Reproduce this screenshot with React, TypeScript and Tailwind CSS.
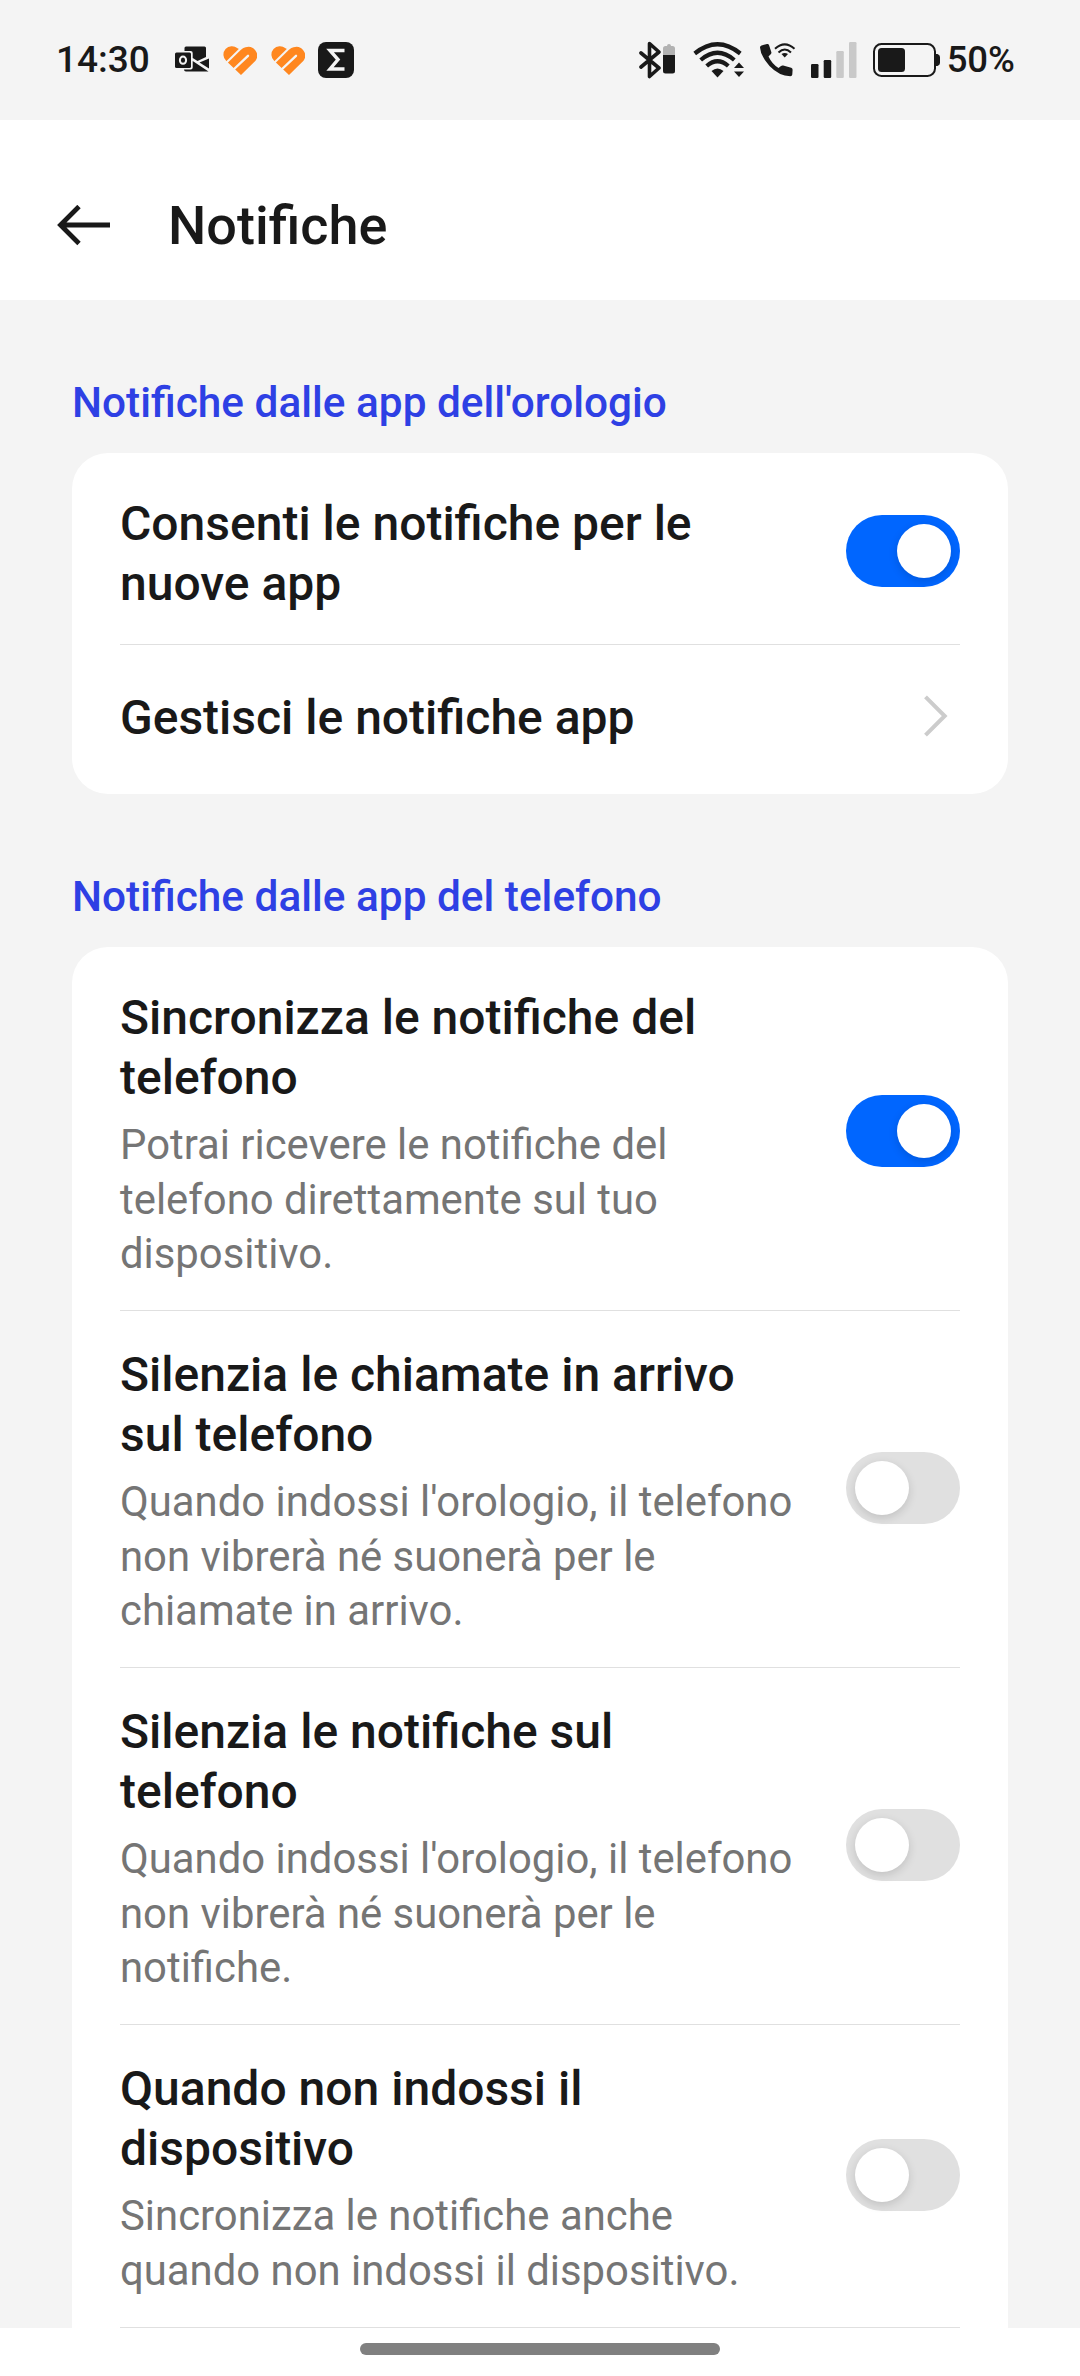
import type { ReactNode } from 'react';

function Outlook() {
  return (
    <svg width="36" height="28" viewBox="0 0 36 28" className="shrink-0">
      <path d="M12 .5h18.500a1.500 1.500 0 0 1 1.500 1.500v9L23.500 15 18.700 12V7a2 2 0 0 0-2-2H10.500V2A1.500 1.500 0 0 1 12 .5Z" fill="#191919" />
      <path d="M35 12.500V22.500L25.500 16.500Z" fill="#191919" />
      <path d="M10 23.500h6.700a2 2 0 0 0 2-2V15L34.500 25.500H12a2 2 0 0 1-2-2Z" fill="#191919" />
      <rect x="1" y="6.500" width="16" height="15.500" rx="1.500" fill="#191919" />
      <ellipse cx="9" cy="14.200" rx="3.100" ry="3.600" fill="none" stroke="#f4f4f4" strokeWidth="2" />
    </svg>
  );
}

function Heart() {
  return (
    <svg width="34" height="30" viewBox="0 0 34 30" className="shrink-0">
      <path d="M18 30 3.300 16A8.100 8.100 0 0 1 14.500 3.300Q16.500 4.800 18.500 4.200 20.300 2.700 22.500 2.200A8.900 8.900 0 0 1 32.500 15.800Z" fill="#ff871f" />
      <g fill="none" stroke="#f4f4f4" strokeWidth="2">
        <path d="M2.500 18.500 18 3.200" />
        <path d="M9 26 25 10.800" strokeWidth="2.400" strokeLinecap="round" />
      </g>
    </svg>
  );
}

function Sigma() {
  return (
    <svg width="36" height="36" viewBox="0 0 36 36" className="shrink-0">
      <rect width="36" height="36" rx="8" fill="#191919" />
      <path d="M26.500 8.500H12L20 17.500 12 27H26.500" fill="none" stroke="#f4f4f4" strokeWidth="3.400" strokeLinejoin="miter" />
    </svg>
  );
}

function Bluetooth() {
  return (
    <svg width="37" height="38" viewBox="0 0 37 38" className="shrink-0">
      <path d="M2 12 20 27 10.500 35.500V2.500L20 11 2 26" fill="none" stroke="#191919" strokeWidth="3.600" strokeLinejoin="round" strokeLinecap="round" />
      <path d="M24 15V7.500A2.500 2.500 0 0 1 26.500 5H28a2 2 0 0 1 4 0h1.500A2.500 2.500 0 0 1 36 7.500V15Z" fill="#b2b2b2" />
      <path d="M24 14h12v16a2.500 2.500 0 0 1-2.500 2.500h-7A2.500 2.500 0 0 1 24 30Z" fill="#191919" />
    </svg>
  );
}

function Wifi() {
  return (
    <svg width="52" height="38" viewBox="0 0 52 38" className="shrink-0">
      <g fill="none" stroke="#191919" strokeWidth="4.200">
        <path d="M1.700 12.500Q24.500-6 47.300 12.500" />
        <path d="M7.700 19Q24.500 4.500 41.300 19" />
        <path d="M13.700 25Q24.500 15.500 35.300 25" />
      </g>
      <path d="M18.500 30Q24.500 25 30.500 30L24.500 36.500Z" fill="#191919" />
      <path d="M41 27 46 21.500l5 5.500Z M41 30.500h10L46 36Z" fill="#191919" />
    </svg>
  );
}

function Phone() {
  return (
    <svg width="38" height="36" viewBox="0 0 38 36" className="shrink-0">
      <path d="M2.500 3.500 8 2q1.500-.3 2 1l2.300 7q.4 1.300-.6 2.200L9.500 14.500q3.500 7.500 10 11.500l2.500-2q1-.8 2.200-.4l8 2.200q1.400.5 1.400 1.900l-.3 4.800q-.2 1.700-1.900 1.700Q20 34 10.500 24 1.500 14 1 5.500q0-1.600 1.500-2Z" fill="#191919" />
      <g fill="none" stroke="#191919" strokeWidth="2">
        <path d="M16 6.800Q25.700-2 35.500 6.800" />
        <path d="M19.500 10.500Q25.700 4.500 32 10.500" />
      </g>
      <path d="M22.500 12Q25.700 10 29 12L25.700 15.500Z" fill="#191919" />
    </svg>
  );
}

function Signal() {
  return (
    <svg width="46" height="36" viewBox="0 0 46 36" className="shrink-0">
      <rect x="0" y="22" width="7.500" height="14" rx="1.200" fill="#191919" />
      <rect x="12.700" y="18" width="7.500" height="18" rx="1.200" fill="#191919" />
      <rect x="25.300" y="9" width="7.500" height="27" rx="1.200" fill="#c9c9c9" />
      <rect x="38" y="0" width="7.500" height="36" rx="1.200" fill="#c9c9c9" />
    </svg>
  );
}

function Battery() {
  return (
    <svg width="68" height="34" viewBox="0 0 68 34" className="shrink-0">
      <rect x="1" y="1" width="61" height="32" rx="7.500" fill="none" stroke="#191919" strokeWidth="2" />
      <rect x="5" y="5" width="27" height="24" rx="3.500" fill="#191919" />
      <path d="M63 11h1.500Q67 12 67 14v6q0 2-2.500 3H63Z" fill="#191919" />
    </svg>
  );
}

function Toggle({ on = false }: { on?: boolean }) {
  return (
    <button
      role="switch"
      aria-checked={on}
      className={
        'mb-[2px] flex h-[72px] w-[114px] shrink-0 items-center rounded-full px-[9px] ' +
        (on ? 'justify-end bg-[#0066ff]' : 'justify-start bg-[#e0e0e0]')
      }
    >
      <span className="size-[54px] rounded-full bg-white shadow-[0_3px_10px_rgba(0,0,0,0.14)]" />
    </button>
  );
}

function Row({ title, text, children }: { title: string; text?: string; children: ReactNode }) {
  return (
    <div className="mx-12 flex items-center justify-between border-b border-[#e0e0e0]">
      <div className={'w-[678px] pt-[34px] ' + (text ? 'pb-[28.500px]' : 'pb-[30px]')}>
        <h3 className="text-[48px] leading-[60px] font-medium text-[#191919]">{title}</h3>
        {text && <p className="mt-[10px] text-[41.850px] leading-[54.500px] text-[#757575]">{text}</p>}
      </div>
      {children}
    </div>
  );
}

function SectionTitle({ children }: { children: ReactNode }) {
  return <h2 className="text-[42.350px] leading-[54px] font-medium text-[#2e40e4]">{children}</h2>;
}

export default function App() {
  return (
    <div className="flex h-[2376px] w-[1080px] flex-col overflow-hidden bg-[#f4f4f4] font-[Roboto,sans-serif] text-[#191919]">
      <header className="flex h-[120px] shrink-0 items-center justify-between pr-[65px] pl-[56px]">
        <div className="flex items-center">
          <span className="w-[118px] text-[37px] leading-[42px] font-medium">14:30</span>
          <Outlook />
          <span className="ml-[13px] flex gap-[14px]">
            <Heart />
            <Heart />
          </span>
          <span className="ml-[13px]">
            <Sigma />
          </span>
        </div>
        <div className="flex items-center">
          <Bluetooth />
          <span className="ml-[17px]"><Wifi /></span>
          <span className="ml-[14px]"><Phone /></span>
          <span className="ml-[14px]"><Signal /></span>
          <span className="ml-[16px]"><Battery /></span>
          <span className="ml-[6px] text-[36.500px] leading-[42px] font-medium">50%</span>
        </div>
      </header>

      <div className="flex h-[180px] shrink-0 items-center bg-white pt-[32px] pl-[57px]">
        <svg width="54" height="42" viewBox="0 0 54 42" fill="none" stroke="#191919" strokeWidth="4.800">
          <path d="M53 20H4M22 1.500 3.500 20 22 38.500" />
        </svg>
        <h1 className="ml-[57px] text-[54px] leading-[64px] font-medium">Notifiche</h1>
      </div>

      <main className="min-h-0 flex-1 overflow-hidden px-[72px] pt-[76px]">
        <SectionTitle>Notifiche dalle app dell&apos;orologio</SectionTitle>
        <section className="mt-[23px] rounded-[36px] bg-white pt-[7px] pb-[6px]">
          <Row title="Consenti le notifiche per le nuove app">
            <Toggle on />
          </Row>
          <div className="mx-12 flex h-[143px] items-center justify-between">
            <h3 className="pt-[3px] text-[48px] leading-[60px] font-medium">Gestisci le notifiche app</h3>
            <svg width="24" height="42" viewBox="0 0 24 42" fill="none" stroke="#cccccc" strokeWidth="4" className="mr-[12px] mb-[1px]">
              <path d="M1.500 1.800 20.700 21 1.500 40.200" />
            </svg>
          </div>
        </section>

        <div className="mt-[76px]">
          <SectionTitle>Notifiche dalle app del telefono</SectionTitle>
        </div>
        <section className="mt-[23px] rounded-t-[36px] bg-white pt-[7px] pb-[6px]">
          <Row title="Sincronizza le notifiche del telefono" text="Potrai ricevere le notifiche del telefono direttamente sul tuo dispositivo.">
            <Toggle on />
          </Row>
          <Row title="Silenzia le chiamate in arrivo sul telefono" text="Quando indossi l'orologio, il telefono non vibrerà né suonerà per le chiamate in arrivo.">
            <Toggle />
          </Row>
          <Row title="Silenzia le notifiche sul telefono" text="Quando indossi l'orologio, il telefono non vibrerà né suonerà per le notifiche.">
            <Toggle />
          </Row>
          <Row title="Quando non indossi il dispositivo" text="Sincronizza le notifiche anche quando non indossi il dispositivo.">
            <Toggle />
          </Row>
        </section>
      </main>

      <footer className="flex h-[48px] shrink-0 justify-center bg-white pt-[15px]">
        <div className="h-[12px] w-[360px] rounded-full bg-[#808080]" />
      </footer>
    </div>
  );
}
